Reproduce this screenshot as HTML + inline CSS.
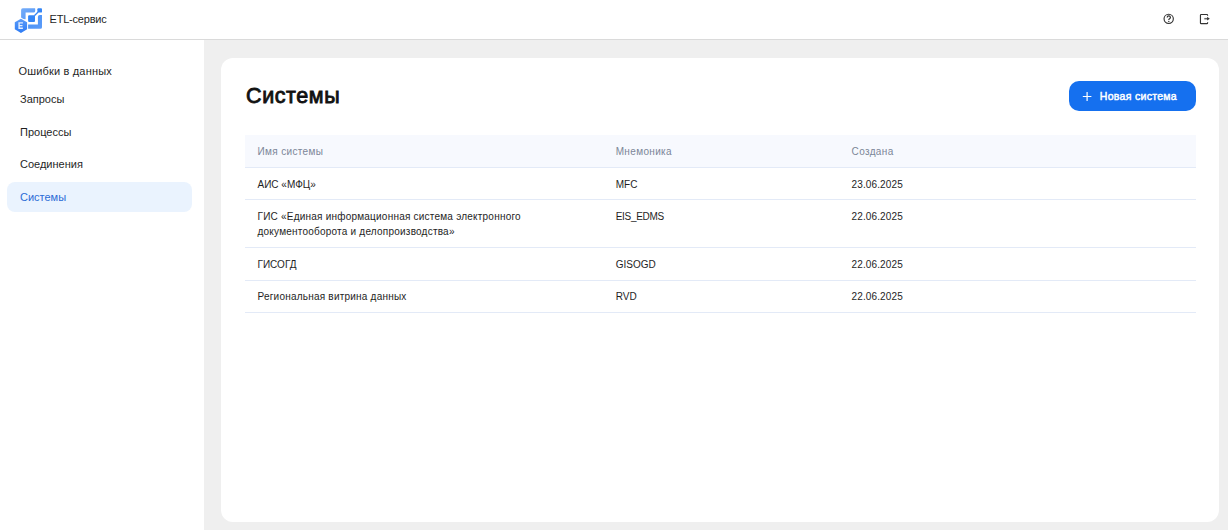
<!DOCTYPE html>
<html><head><meta charset="utf-8">
<style>
*{margin:0;padding:0;box-sizing:border-box}
html,body{width:1228px;height:530px;overflow:hidden;background:#EFEFEF;font-family:"Liberation Sans",sans-serif;color:#1E1E1E}
.abs{position:absolute;white-space:nowrap}
#hdr{position:absolute;left:0;top:0;width:1228px;height:40px;background:#fff;border-bottom:1px solid #DADADA}
#side{position:absolute;left:0;top:40px;width:203.5px;height:490px;background:#fff}
#card{position:absolute;left:221px;top:57.5px;width:998px;height:464.5px;background:#fff;border-radius:12px}
.nav{position:absolute;font-size:11px;line-height:16px;color:#1F1F1F;white-space:nowrap}
.th{position:absolute;font-size:10px;line-height:15px;color:#7C8698;white-space:nowrap;letter-spacing:0.35px}
.cy{letter-spacing:0.22px}
.dt{letter-spacing:0.12px}
.td{position:absolute;font-size:10px;line-height:15px;color:#1E1E1E;white-space:nowrap}
.line{position:absolute;left:245px;width:951px;height:1px;background:#E3EAF7}
</style></head>
<body>
<div id="hdr"></div>
<svg class="abs" style="left:0;top:0" width="60" height="40" viewBox="0 0 60 40">
  <defs>
    <linearGradient id="g1" x1="0" y1="0" x2="1" y2="1"><stop offset="0" stop-color="#74ACF9"/><stop offset="1" stop-color="#5598F7"/></linearGradient>
    <linearGradient id="g2" x1="0" y1="0" x2="0" y2="1"><stop offset="0" stop-color="#5A9BF8"/><stop offset="1" stop-color="#2E7CF5"/></linearGradient>
    <linearGradient id="g3" x1="0" y1="0" x2="1" y2="1"><stop offset="0" stop-color="#4690F7"/><stop offset="1" stop-color="#5C9CF8"/></linearGradient>
  </defs>
  <path d="M21.1 10 Q21.1 8.3 22.8 8.3 L34.9 8.3 Q35.2 8.3 35.2 8.6 L35.2 10.9 Q35.2 12.6 33.5 12.6 L25.6 12.6 L25.6 19.2 L21.1 19.2 Z" fill="url(#g1)"/>
  <rect x="37.4" y="8.3" width="4.6" height="4.3" rx="0.9" fill="#3385F6"/>
  <path d="M34.4 15.8 L38.1 12" stroke="#3385F6" stroke-width="1.25"/>
  <rect x="28.1" y="15.2" width="6.9" height="6.8" rx="1" fill="#3385F6"/>
  <path d="M37.9 16.9 Q37.9 15 39.8 15 L41.7 15 Q42 15 42 15.3 L42 27.2 Q42 28.8 40.4 28.8 L28.1 28.8 L28.1 24.5 L37.9 24.5 Z" fill="url(#g3)"/>
  <path d="M20.95 17.6 L28 21.8 L28 29.8 L20.95 34 L13.9 29.8 L13.9 21.8 Z" fill="#fff"/>
  <path d="M20.95 18.7 L27.1 22.3 L27.1 29.3 L20.95 32.9 L14.8 29.3 L14.8 22.3 Z" fill="url(#g2)"/>
  <path d="M18.4 22.2 H22.9 V23.6 H19.8 V24.9 H22.5 V26.2 H19.8 V27.5 H22.9 V28.9 H18.4 Z" fill="#E4EEFE"/>
</svg>
<div class="abs" style="left:49.5px;top:10.9px;font-size:11px;line-height:16px;color:#1F1F1F;letter-spacing:-0.2px">ETL-сервис</div>

<!-- help icon -->
<svg class="abs" style="left:1160px;top:10px" width="18" height="18" viewBox="0 0 18 18">
  <circle cx="8.7" cy="8.85" r="4.65" fill="none" stroke="#333" stroke-width="1.15"/>
  <path d="M7.2 7.6 Q7.2 5.9 8.8 5.9 Q10.4 5.9 10.4 7.4 Q10.4 8.3 9.5 8.8 Q8.8 9.2 8.8 10" fill="none" stroke="#333" stroke-width="1.25"/>
  <circle cx="8.8" cy="11.45" r="0.7" fill="#333"/>
</svg>
<!-- logout icon -->
<svg class="abs" style="left:1196px;top:10px" width="18" height="18" viewBox="0 0 18 18">
  <path d="M11.6 5.7 V5.2 Q11.6 4.45 10.85 4.45 H5.2 Q4.45 4.45 4.45 5.2 V12.9 Q4.45 13.65 5.2 13.65 H10.85 Q11.6 13.65 11.6 12.9 V12.3" fill="none" stroke="#333" stroke-width="1.15"/>
  <path d="M8.3 8.7 H11.6" stroke="#666" stroke-width="1.5"/>
  <path d="M11.1 6.8 L13.8 8.7 L11.1 10.6 Z" fill="#333"/>
</svg>

<div id="side"></div>
<div class="nav" style="left:18.5px;top:63.3px;letter-spacing:0.17px">Ошибки в данных</div>
<div class="nav" style="left:20px;top:90.8px">Запросы</div>
<div class="nav" style="left:20px;top:123.9px">Процессы</div>
<div class="nav" style="left:20px;top:156.4px">Соединения</div>
<div class="abs" style="left:7.3px;top:182px;width:184.7px;height:29.6px;background:#EAF3FE;border-radius:8px"></div>
<div class="nav" style="left:20px;top:189.2px;color:#2C6CD6">Системы</div>

<div id="card"></div>
<div class="abs" style="left:246px;top:83.25px;font-size:21.5px;line-height:26px;font-weight:400;color:#111;letter-spacing:0.6px;-webkit-text-stroke:0.85px #111">Системы</div>

<div class="abs" style="left:1069.2px;top:81.3px;width:126.4px;height:29.5px;background:#1570EF;border-radius:10px"></div>
<svg class="abs" style="left:1080px;top:90px" width="14" height="14" viewBox="0 0 14 14">
  <path d="M7.1 2 V10.9 M2.8 6.5 H11.4" stroke="#fff" stroke-width="1.2"/>
</svg>
<div class="abs" style="left:1099.8px;top:88.9px;font-size:10.5px;line-height:15px;font-weight:400;color:#fff;-webkit-text-stroke:0.45px #fff;letter-spacing:0.3px">Новая система</div>

<!-- table -->
<div class="abs" style="left:245px;top:135px;width:951px;height:32px;background:#F7F9FE"></div>
<div class="line" style="top:167px"></div>
<div class="th" style="left:257.5px;top:143.9px">Имя системы</div>
<div class="th" style="left:615.7px;top:143.9px">Мнемоника</div>
<div class="th" style="left:851.6px;top:143.9px">Создана</div>

<div class="td" style="left:257.5px;top:176.5px">АИС «МФЦ»</div>
<div class="td" style="left:615.7px;top:176.5px">MFC</div>
<div class="td" style="left:851.6px;top:176.5px;letter-spacing:0.12px">23.06.2025</div>
<div class="line" style="top:199px"></div>

<div class="td cy" style="left:257.5px;top:209px">ГИС «Единая информационная система электронного<br>документооборота и делопроизводства»</div>
<div class="td" style="left:615.7px;top:209px;letter-spacing:-0.3px">EIS_EDMS</div>
<div class="td" style="left:851.6px;top:209px;letter-spacing:0.12px">22.06.2025</div>
<div class="line" style="top:247px"></div>

<div class="td" style="left:257.5px;top:256.6px">ГИСОГД</div>
<div class="td" style="left:615.7px;top:256.6px">GISOGD</div>
<div class="td" style="left:851.6px;top:256.6px;letter-spacing:0.12px">22.06.2025</div>
<div class="line" style="top:279.5px"></div>

<div class="td cy" style="left:257.5px;top:289.2px">Региональная витрина данных</div>
<div class="td" style="left:615.7px;top:289.2px">RVD</div>
<div class="td" style="left:851.6px;top:289.2px;letter-spacing:0.12px">22.06.2025</div>
<div class="line" style="top:312px"></div>
</body></html>
